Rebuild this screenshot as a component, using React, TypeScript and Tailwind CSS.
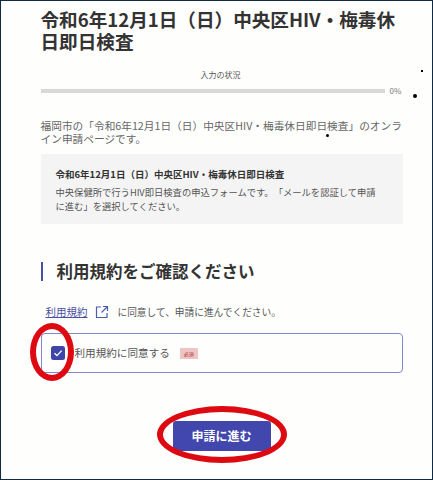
const font = '[font-family:"Noto_Sans_CJK_JP","Noto_Sans",sans-serif]';

export default function App() {
  return (
    <div className={`relative w-[433px] h-[480px] overflow-hidden bg-[#fefefd] border-[1.5px] border-[#0f2a44] [text-spacing-trim:space-all] ${font}`}>
      <div className="w-[362px] ml-[39.5px] flex flex-col">
        <h1 className="mt-[7px] text-[18.6px] leading-[22px] font-bold text-[#333333]">
          令和6年12月1日（日）中央区HIV・梅毒休日即日検査
        </h1>

        {/* progress */}
        <p className="mt-[17px] text-center text-[8px] leading-[12px] text-[#555555] pr-[2px]">入力の状況</p>
        <div className="mt-[5px] flex items-center gap-[5px]">
          <div className="w-[344px] h-[4px] bg-[#d9d9d9]" />
          <span className="text-[8px] leading-[10px] text-[#777777]">0%</span>
        </div>

        <p className="mt-[24px] text-[10.7px] leading-[12.5px] text-[#666666]">
          福岡市の「令和6年12月1日（日）中央区HIV・梅毒休日即日検査」のオンライン申請ページです。
        </p>

        <div className="mt-[9px] h-[70px] bg-[#f4f4f4] pl-[15px] pr-[24px] pt-[13px]">
          <p className="text-[9.5px] leading-[14px] font-bold text-[#333333]">
            令和6年12月1日（日）中央区HIV・梅毒休日即日検査
          </p>
          <p className="mt-[4px] text-[9.3px] leading-[14px] text-[#555555]">
            中央保健所で行うHIV即日検査の申込フォームです。「メールを認証して申請に進む」を選択してください。
          </p>
        </div>

        <div className="mt-[38px] flex items-center gap-[14px]">
          <div className="w-[2px] h-[19px] bg-[#4a4fa3]" />
          <h2 className="text-[16.5px] leading-[19px] font-bold text-[#333333]">利用規約をご確認ください</h2>
        </div>

        <div className="mt-[24px] ml-[5px] flex items-center text-[9.7px] leading-[14px] text-[#555555]">
          <span className="text-[10.5px] text-[#4a4fa3] underline">利用規約</span>
          <svg className="ml-[7px]" width="14" height="14" viewBox="0 0 14 14" fill="none" stroke="#4a5fb0" strokeWidth="1.2">
            <path d="M6 2H1.5v10.5H12V8" />
            <path d="M8 1.5h4.5V6M12.5 1.5L6.5 7.5" />
          </svg>
          <span className="ml-[9px]">に同意して、申請に進んでください。</span>
        </div>

        <div className="mt-[14px] h-[40px] rounded-[4px] border border-[#8388c8] flex items-center pl-[9px]">
          <span className="w-[14px] h-[14px] rounded-[2.5px] bg-[#3f45a8] flex items-center justify-center">
            <svg width="10" height="10" viewBox="0 0 10 10" fill="none" stroke="#ffffff" strokeWidth="1.4">
              <path d="M1.5 5.2L4 7.6L8.6 2.6" />
            </svg>
          </span>
          <span className="ml-[10px] text-[10.6px] leading-[14px] text-[#555555]">利用規約に同意する</span>
          <span className="ml-[10px] w-[18px] h-[11px] rounded-[1px] bg-[#f0c4c4] text-[5px] leading-[11px] text-center text-[#a33]">必須</span>
        </div>

        <button className="mt-[48px] self-center w-[98px] h-[30px] rounded-[3px] bg-[#4247ad] text-white text-[12px] font-bold">
          申請に進む
        </button>
      </div>

      {/* hand drawn annotations */}
      <div className="absolute left-[29px] top-[322px] w-[44px] h-[58px] rounded-[50%] border-[6px] border-[#dd0a12]" />
      <div className="absolute left-[156px] top-[405px] w-[130px] h-[57px] rounded-[50%] border-[6px] border-[#dd0a12]" />
      <div className="absolute left-[420px] top-[69px] w-[1.5px] h-[1.5px] bg-black" />
      <div className="absolute left-[412px] top-[93px] w-[4px] h-[4px] rounded-full bg-black" />
      <div className="absolute left-[325px] top-[133px] w-[3px] h-[3px] rounded-full bg-black" />
    </div>
  );
}
